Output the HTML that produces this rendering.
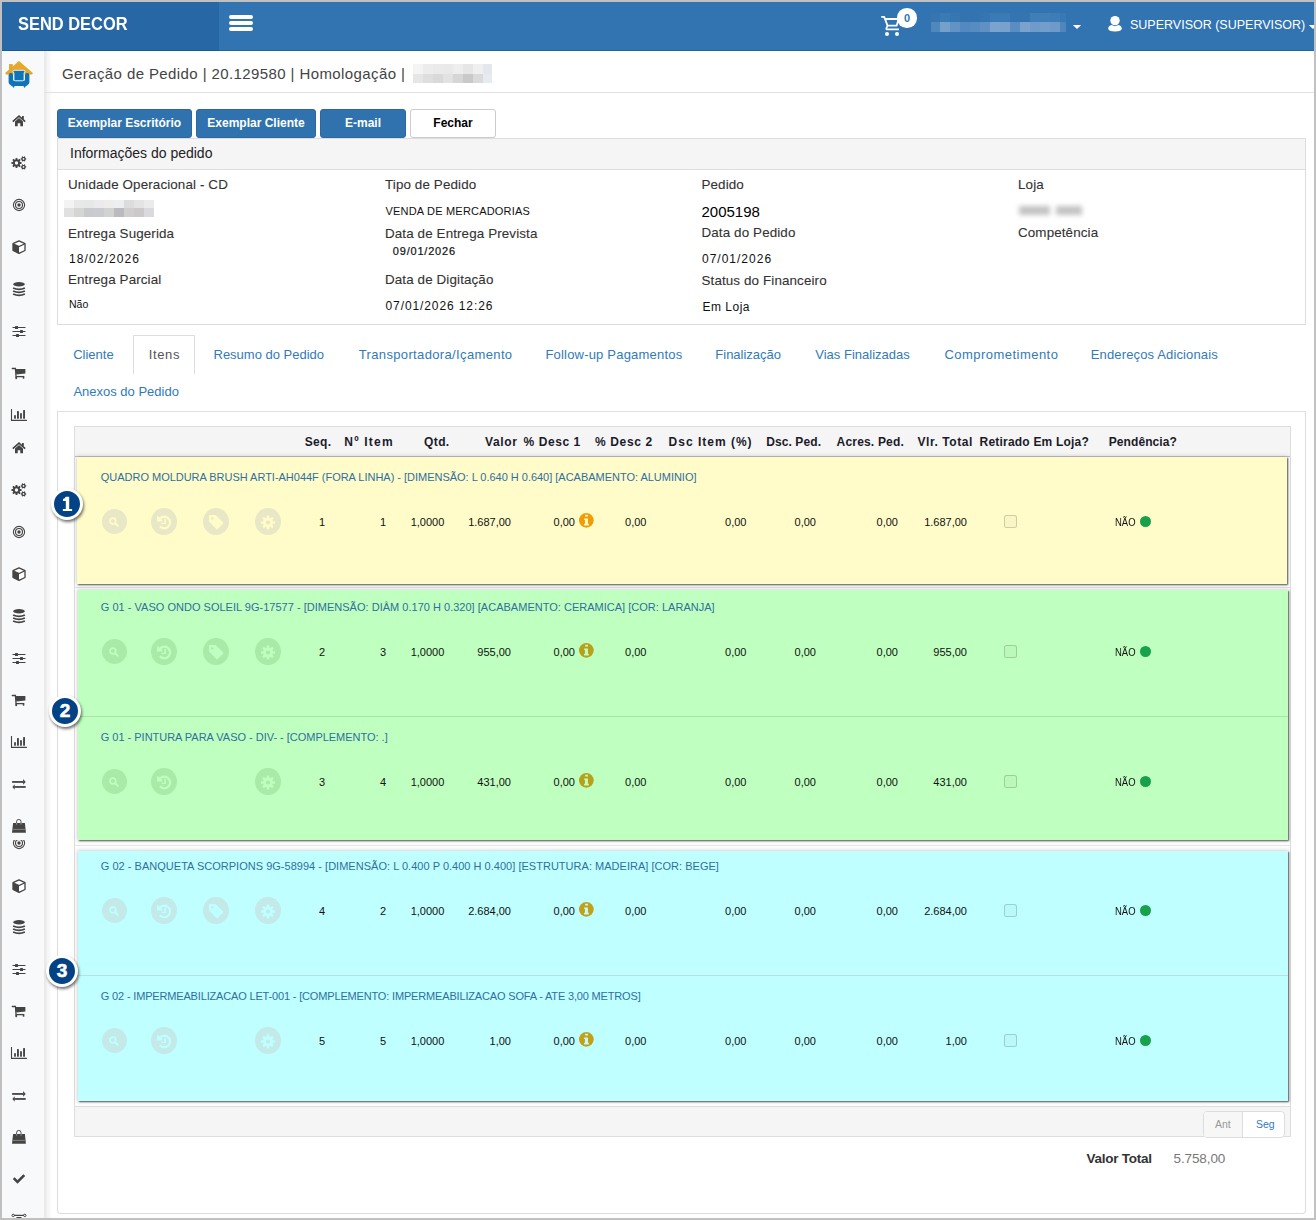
<!DOCTYPE html><html><head><meta charset="utf-8"><title>Send Decor</title><style>
*{box-sizing:border-box;margin:0;padding:0}
html,body{width:1316px;height:1220px;overflow:hidden;background:#fff}
body{font-family:"Liberation Sans",sans-serif;position:relative;color:#333}
.a{position:absolute;white-space:nowrap}
svg.a{overflow:visible}
.gb{position:absolute;background:#c0c0c0}
.btn{position:absolute;top:109px;height:29px;border-radius:3px;background:#3072ae;border:1px solid #2b67a2;color:#fff;font:bold 12px "Liberation Sans",sans-serif;text-align:center;line-height:27px}
.lbl{position:absolute;font-size:13.4px;color:#333;white-space:nowrap}
.val{position:absolute;font-size:12px;color:#111;white-space:nowrap}
.tab{position:absolute;font-size:13px;color:#337ab7;white-space:nowrap}
.hd{position:absolute;font:bold 12px "Liberation Sans",sans-serif;color:#1b1b2a;white-space:nowrap}
.card{position:absolute;box-shadow:1px 1px 1.5px rgba(0,0,0,.62),0 0 4px 1px rgba(0,0,0,.16)}
.ttl{position:absolute;left:100px;font-size:11px;color:#31708f;white-space:nowrap}
.d{position:absolute;font-size:11px;color:#111;white-space:nowrap}
.circ{position:absolute;border-radius:50%}
.badge{position:absolute;width:32px;height:32px;border-radius:50%;background:#034285;border:3.5px solid #fff;box-shadow:1px 2px 3px rgba(0,0,0,.55);color:#fff;font:bold 19px "Liberation Sans",sans-serif;text-align:center;line-height:26.5px;-webkit-text-stroke:0.6px #fff}
</style></head><body>
<div class="a" style="left:2px;top:2px;width:1312px;height:49px;background:#3174b1;border-bottom:1px solid #24639f"></div>
<div class="a" style="left:2px;top:2px;width:217px;height:49px;background:#2767a5;border-bottom:1px solid #17589a"></div>
<div class="a" style="left:18.3px;top:13.2px;font:bold 19px 'Liberation Sans',sans-serif;color:#fff;transform:scaleX(0.865);transform-origin:0 0">SEND DECOR</div>
<div class="a" style="left:229px;top:15px;width:24px;height:4px;border-radius:2px;background:#fff"></div>
<div class="a" style="left:229px;top:21px;width:24px;height:4px;border-radius:2px;background:#fff"></div>
<div class="a" style="left:229px;top:27px;width:24px;height:4px;border-radius:2px;background:#fff"></div>
<svg class="a" style="left:876px;top:4px" width="30" height="36"><path d="M5.2 12.9 H8.2 L11.6 21.7 H20.6 L22.6 15 H9" fill="none" stroke="#fff" stroke-width="1.8" stroke-linejoin="round"/><path d="M11.6 21.7 L10.4 24.2 Q10.1 25.4 11.4 25.4 H23" fill="none" stroke="#fff" stroke-width="1.8"/><circle cx="11" cy="30.1" r="2" fill="#fff"/><circle cx="21" cy="30.1" r="2" fill="#fff"/></svg>
<div class="circ" style="left:897.4px;top:8.3px;width:19.4px;height:19.4px;background:#fff"></div>
<div class="a" style="left:897.4px;top:12px;width:19.4px;text-align:center;font:bold 11px 'Liberation Sans',sans-serif;color:#3174b1">0</div>
<div class="a" style="left:931px;top:13px;width:9px;height:9px;background:#3576b1"></div>
<div class="a" style="left:931px;top:22px;width:9px;height:10px;background:#4f88bd"></div>
<div class="a" style="left:940px;top:13px;width:10px;height:9px;background:#3a7ab5"></div>
<div class="a" style="left:940px;top:22px;width:10px;height:10px;background:#76a0cc"></div>
<div class="a" style="left:950px;top:13px;width:10px;height:9px;background:#3676b2"></div>
<div class="a" style="left:950px;top:22px;width:10px;height:10px;background:#6393c5"></div>
<div class="a" style="left:960px;top:13px;width:10px;height:9px;background:#3373b0"></div>
<div class="a" style="left:960px;top:22px;width:10px;height:10px;background:#5289c0"></div>
<div class="a" style="left:970px;top:13px;width:10px;height:9px;background:#3373b0"></div>
<div class="a" style="left:970px;top:22px;width:10px;height:10px;background:#578cc1"></div>
<div class="a" style="left:980px;top:13px;width:10px;height:9px;background:#3575b1"></div>
<div class="a" style="left:980px;top:22px;width:10px;height:10px;background:#6090c4"></div>
<div class="a" style="left:990px;top:13px;width:10px;height:9px;background:#3b7bb5"></div>
<div class="a" style="left:990px;top:22px;width:10px;height:10px;background:#7aa3ce"></div>
<div class="a" style="left:1000px;top:13px;width:10px;height:9px;background:#3b7bb5"></div>
<div class="a" style="left:1000px;top:22px;width:10px;height:10px;background:#78a1cd"></div>
<div class="a" style="left:1010px;top:13px;width:10px;height:9px;background:#3474b1"></div>
<div class="a" style="left:1010px;top:22px;width:10px;height:10px;background:#5a8ec2"></div>
<div class="a" style="left:1020px;top:13px;width:10px;height:9px;background:#3474b1"></div>
<div class="a" style="left:1020px;top:22px;width:10px;height:10px;background:#79a2cd"></div>
<div class="a" style="left:1030px;top:13px;width:10px;height:9px;background:#3f7eb7"></div>
<div class="a" style="left:1030px;top:22px;width:10px;height:10px;background:#6f9bca"></div>
<div class="a" style="left:1040px;top:13px;width:10px;height:9px;background:#3f7eb7"></div>
<div class="a" style="left:1040px;top:22px;width:10px;height:10px;background:#729ecb"></div>
<div class="a" style="left:1050px;top:13px;width:10px;height:9px;background:#3d7cb6"></div>
<div class="a" style="left:1050px;top:22px;width:10px;height:10px;background:#6d9ac9"></div>
<div class="a" style="left:1060px;top:13px;width:6px;height:9px;background:#3878b3"></div>
<div class="a" style="left:1060px;top:22px;width:6px;height:10px;background:#4f87bd"></div>
<svg class="a" style="left:1072px;top:24px" width="10" height="6"><path d="M0.8 1 H9.2 L5 5 Z" fill="#fff"/></svg>
<svg class="a" style="left:1106px;top:14px" width="18" height="20"><circle cx="9" cy="6.6" r="4.7" fill="#fff"/><path d="M2.2 14.5 Q2.4 11.6 5.5 11 L9 12.2 L12.5 11 Q15.6 11.6 15.8 14.5 Q15.8 17.4 9 17.4 Q2.2 17.4 2.2 14.5 Z" fill="#fff"/></svg>
<div class="a" style="left:1130px;top:17.6px;font-size:12.5px;color:#fff">SUPERVISOR (SUPERVISOR)</div>
<svg class="a" style="left:1308px;top:24px" width="10" height="6"><path d="M0.8 1 H9.2 L5 5 Z" fill="#fff"/></svg>
<div class="a" style="left:2px;top:51px;width:42px;height:1167px;background:#f8f9fb"></div>
<div class="a" style="left:44px;top:51px;width:9px;height:1167px;background:linear-gradient(to right,#eaeaea,#ececec 25%,#f5f5f5 35%,#f7f7f7 55%,#fdfdfd 80%,#fff)"></div>
<svg class="a" style="left:4px;top:59px" width="32" height="32"><path d="M15 2.1 L28.3 13.6 Q29.3 14.8 28 15.6 L24 15.7 H6 L2 15.6 Q0.7 14.8 1.7 13.6 Z" fill="#e5a82c"/><rect x="5" y="4.9" width="3.8" height="6.5" rx="0.6" fill="#e5a82c"/><path d="M4.6 16.3 Q4.6 14.1 6.85 14.1 Q9.1 14.1 9.1 16.3 V21.5 H20.9 V16.3 Q20.9 14.1 23.15 14.1 Q25.4 14.1 25.4 16.3 V23.2 Q25.4 24.6 23.6 26 L22.4 26.9 H7.6 L6.4 26 Q4.6 24.6 4.6 23.2 Z" fill="#0f73b8"/><path d="M7.9 26.4 H10.9 L9.4 29 Z M19.1 26.4 H22.1 L20.6 29 Z" fill="#0f73b8"/><path d="M10.1 11.3 H19.9 Q21.1 11.3 20.9 12.5 L20.1 14 V20.2 Q20.1 21.8 18.5 21.8 H11.5 Q9.9 21.8 9.9 20.2 V14 L9.1 12.5 Q8.9 11.3 10.1 11.3 Z" fill="#0f73b8" stroke="#f8f9fb" stroke-width="0.9"/></svg>
<svg class="a" style="left:11px;top:113px" width="16" height="16"><path d="M1.8 8.6 L8 3.2 L14.2 8.6" fill="none" stroke="#444" stroke-width="1.7"/><rect x="11" y="3" width="1.8" height="3.2" fill="#444"/><path d="M4 8.4 L8 5 L12 8.4 V13.2 H9.3 V10.2 H6.7 V13.2 H4 Z" fill="#444"/></svg>
<svg class="a" style="left:11px;top:155px" width="16" height="16"><path d="M9.07 7.01 L10.52 7.12 L10.52 8.88 L9.07 8.99 L8.72 9.82 L9.67 10.93 L8.43 12.17 L7.32 11.22 L6.49 11.57 L6.38 13.02 L4.62 13.02 L4.51 11.57 L3.68 11.22 L2.57 12.17 L1.33 10.93 L2.28 9.82 L1.93 8.99 L0.48 8.88 L0.48 7.12 L1.93 7.01 L2.28 6.18 L1.33 5.07 L2.57 3.83 L3.68 4.78 L4.51 4.43 L4.62 2.98 L6.38 2.98 L6.49 4.43 L7.32 4.78 L8.43 3.83 L9.67 5.07 L8.72 6.18 Z M7.20 8.00 A1.7 1.7 0 1 0 3.80 8.00 A1.7 1.7 0 1 0 7.20 8.00 Z" fill="#444" fill-rule="evenodd"/><path d="M14.35 3.13 L15.21 3.20 L15.21 4.60 L14.35 4.67 L14.09 5.12 L14.46 5.90 L13.25 6.60 L12.76 5.88 L12.24 5.88 L11.75 6.60 L10.54 5.90 L10.91 5.12 L10.65 4.67 L9.79 4.60 L9.79 3.20 L10.65 3.13 L10.91 2.68 L10.54 1.90 L11.75 1.20 L12.24 1.92 L12.76 1.92 L13.25 1.20 L14.46 1.90 L14.09 2.68 Z M13.35 3.90 A0.85 0.85 0 1 0 11.65 3.90 A0.85 0.85 0 1 0 13.35 3.90 Z" fill="#444" fill-rule="evenodd"/><path d="M14.35 11.13 L15.21 11.20 L15.21 12.60 L14.35 12.67 L14.09 13.12 L14.46 13.90 L13.25 14.60 L12.76 13.88 L12.24 13.88 L11.75 14.60 L10.54 13.90 L10.91 13.12 L10.65 12.67 L9.79 12.60 L9.79 11.20 L10.65 11.13 L10.91 10.68 L10.54 9.90 L11.75 9.20 L12.24 9.92 L12.76 9.92 L13.25 9.20 L14.46 9.90 L14.09 10.68 Z M13.35 11.90 A0.85 0.85 0 1 0 11.65 11.90 A0.85 0.85 0 1 0 13.35 11.90 Z" fill="#444" fill-rule="evenodd"/></svg>
<svg class="a" style="left:11px;top:197px" width="16" height="16"><circle cx="8" cy="8" r="5.6" fill="none" stroke="#444" stroke-width="1.1"/><circle cx="8" cy="8" r="3.5" fill="none" stroke="#444" stroke-width="1.1"/><circle cx="8" cy="8" r="1.7" fill="#444"/></svg>
<svg class="a" style="left:11px;top:239px" width="16" height="16"><path d="M8 1.8 L14 4.7 V11.5 L8 14.4 L2 11.5 V4.7 Z" fill="#fff" stroke="#444" stroke-width="1.3" stroke-linejoin="round"/><path d="M2 4.7 L8 7.6 V14.4 L2 11.5 Z" fill="#444"/><path d="M2 4.7 L8 7.6 L14 4.7" fill="none" stroke="#444" stroke-width="1.2"/></svg>
<svg class="a" style="left:11px;top:281px" width="16" height="16"><ellipse cx="8" cy="3.3" rx="5.9" ry="2.2" fill="#444"/><path d="M2.1 6.9 Q8 9.7 13.9 6.9" fill="none" stroke="#444" stroke-width="1.7"/><path d="M2.1 9.9 Q8 12.7 13.9 9.9" fill="none" stroke="#444" stroke-width="1.7"/><path d="M2.1 12.9 Q8 15.7 13.9 12.9" fill="none" stroke="#444" stroke-width="1.7"/></svg>
<svg class="a" style="left:11px;top:323px" width="16" height="16"><path d="M1.9 4.5 H14.1 M1.9 8.5 H14.1 M1.9 12.5 H14.1" stroke="#444" stroke-width="1" stroke-linecap="round"/><rect x="4" y="3" width="3" height="3" rx="0.6" fill="#444"/><rect x="9" y="7" width="3" height="3" rx="0.6" fill="#444"/><rect x="5" y="11" width="3" height="3" rx="0.6" fill="#444"/></svg>
<svg class="a" style="left:11px;top:365px" width="16" height="16"><path d="M1.3 3.5 H4.4 L5.2 13.6" fill="none" stroke="#444" stroke-width="1.3" stroke-linecap="round"/><path d="M4.3 4 H14.4 V8.5 L5.3 9.6 Z" fill="#444"/><path d="M5 11.6 H13.2" stroke="#444" stroke-width="1.3"/><rect x="4.6" y="11.4" width="1.5" height="2.3" fill="#444"/><rect x="11.8" y="11.4" width="1.5" height="2.3" fill="#444"/></svg>
<svg class="a" style="left:11px;top:407px" width="16" height="16"><path d="M0.5 2.1 V13.4 H15.9" fill="none" stroke="#444" stroke-width="1.1"/><rect x="3.1" y="8.2" width="1.8" height="3.5" fill="#444"/><rect x="6" y="4.1" width="1.9" height="7.6" fill="#444"/><rect x="9.1" y="6.2" width="1.8" height="5.5" fill="#444"/><rect x="12.1" y="3.1" width="1.9" height="8.6" fill="#444"/></svg>
<svg class="a" style="left:11px;top:440px" width="16" height="16"><path d="M1.8 8.6 L8 3.2 L14.2 8.6" fill="none" stroke="#444" stroke-width="1.7"/><rect x="11" y="3" width="1.8" height="3.2" fill="#444"/><path d="M4 8.4 L8 5 L12 8.4 V13.2 H9.3 V10.2 H6.7 V13.2 H4 Z" fill="#444"/></svg>
<svg class="a" style="left:11px;top:482px" width="16" height="16"><path d="M9.07 7.01 L10.52 7.12 L10.52 8.88 L9.07 8.99 L8.72 9.82 L9.67 10.93 L8.43 12.17 L7.32 11.22 L6.49 11.57 L6.38 13.02 L4.62 13.02 L4.51 11.57 L3.68 11.22 L2.57 12.17 L1.33 10.93 L2.28 9.82 L1.93 8.99 L0.48 8.88 L0.48 7.12 L1.93 7.01 L2.28 6.18 L1.33 5.07 L2.57 3.83 L3.68 4.78 L4.51 4.43 L4.62 2.98 L6.38 2.98 L6.49 4.43 L7.32 4.78 L8.43 3.83 L9.67 5.07 L8.72 6.18 Z M7.20 8.00 A1.7 1.7 0 1 0 3.80 8.00 A1.7 1.7 0 1 0 7.20 8.00 Z" fill="#444" fill-rule="evenodd"/><path d="M14.35 3.13 L15.21 3.20 L15.21 4.60 L14.35 4.67 L14.09 5.12 L14.46 5.90 L13.25 6.60 L12.76 5.88 L12.24 5.88 L11.75 6.60 L10.54 5.90 L10.91 5.12 L10.65 4.67 L9.79 4.60 L9.79 3.20 L10.65 3.13 L10.91 2.68 L10.54 1.90 L11.75 1.20 L12.24 1.92 L12.76 1.92 L13.25 1.20 L14.46 1.90 L14.09 2.68 Z M13.35 3.90 A0.85 0.85 0 1 0 11.65 3.90 A0.85 0.85 0 1 0 13.35 3.90 Z" fill="#444" fill-rule="evenodd"/><path d="M14.35 11.13 L15.21 11.20 L15.21 12.60 L14.35 12.67 L14.09 13.12 L14.46 13.90 L13.25 14.60 L12.76 13.88 L12.24 13.88 L11.75 14.60 L10.54 13.90 L10.91 13.12 L10.65 12.67 L9.79 12.60 L9.79 11.20 L10.65 11.13 L10.91 10.68 L10.54 9.90 L11.75 9.20 L12.24 9.92 L12.76 9.92 L13.25 9.20 L14.46 9.90 L14.09 10.68 Z M13.35 11.90 A0.85 0.85 0 1 0 11.65 11.90 A0.85 0.85 0 1 0 13.35 11.90 Z" fill="#444" fill-rule="evenodd"/></svg>
<svg class="a" style="left:11px;top:524px" width="16" height="16"><circle cx="8" cy="8" r="5.6" fill="none" stroke="#444" stroke-width="1.1"/><circle cx="8" cy="8" r="3.5" fill="none" stroke="#444" stroke-width="1.1"/><circle cx="8" cy="8" r="1.7" fill="#444"/></svg>
<svg class="a" style="left:11px;top:566px" width="16" height="16"><path d="M8 1.8 L14 4.7 V11.5 L8 14.4 L2 11.5 V4.7 Z" fill="#fff" stroke="#444" stroke-width="1.3" stroke-linejoin="round"/><path d="M2 4.7 L8 7.6 V14.4 L2 11.5 Z" fill="#444"/><path d="M2 4.7 L8 7.6 L14 4.7" fill="none" stroke="#444" stroke-width="1.2"/></svg>
<svg class="a" style="left:11px;top:608px" width="16" height="16"><ellipse cx="8" cy="3.3" rx="5.9" ry="2.2" fill="#444"/><path d="M2.1 6.9 Q8 9.7 13.9 6.9" fill="none" stroke="#444" stroke-width="1.7"/><path d="M2.1 9.9 Q8 12.7 13.9 9.9" fill="none" stroke="#444" stroke-width="1.7"/><path d="M2.1 12.9 Q8 15.7 13.9 12.9" fill="none" stroke="#444" stroke-width="1.7"/></svg>
<svg class="a" style="left:11px;top:650px" width="16" height="16"><path d="M1.9 4.5 H14.1 M1.9 8.5 H14.1 M1.9 12.5 H14.1" stroke="#444" stroke-width="1" stroke-linecap="round"/><rect x="4" y="3" width="3" height="3" rx="0.6" fill="#444"/><rect x="9" y="7" width="3" height="3" rx="0.6" fill="#444"/><rect x="5" y="11" width="3" height="3" rx="0.6" fill="#444"/></svg>
<svg class="a" style="left:11px;top:692px" width="16" height="16"><path d="M1.3 3.5 H4.4 L5.2 13.6" fill="none" stroke="#444" stroke-width="1.3" stroke-linecap="round"/><path d="M4.3 4 H14.4 V8.5 L5.3 9.6 Z" fill="#444"/><path d="M5 11.6 H13.2" stroke="#444" stroke-width="1.3"/><rect x="4.6" y="11.4" width="1.5" height="2.3" fill="#444"/><rect x="11.8" y="11.4" width="1.5" height="2.3" fill="#444"/></svg>
<svg class="a" style="left:11px;top:734px" width="16" height="16"><path d="M0.5 2.1 V13.4 H15.9" fill="none" stroke="#444" stroke-width="1.1"/><rect x="3.1" y="8.2" width="1.8" height="3.5" fill="#444"/><rect x="6" y="4.1" width="1.9" height="7.6" fill="#444"/><rect x="9.1" y="6.2" width="1.8" height="5.5" fill="#444"/><rect x="12.1" y="3.1" width="1.9" height="8.6" fill="#444"/></svg>
<svg class="a" style="left:11px;top:776px" width="16" height="16"><path d="M1.1 5.95 H12.4" stroke="#444" stroke-width="1.8"/><path d="M12.1 3.1 L14.7 5.95 L12.1 8.7 Z" fill="#444"/><path d="M3.4 10.95 H14.7" stroke="#444" stroke-width="1.8"/><path d="M3.7 8.2 L1.3 10.95 L3.7 13.7 Z" fill="#444"/></svg>
<svg class="a" style="left:11px;top:835px" width="16" height="16"><circle cx="8" cy="8" r="5.6" fill="none" stroke="#444" stroke-width="1.1"/><circle cx="8" cy="8" r="3.5" fill="none" stroke="#444" stroke-width="1.1"/><circle cx="8" cy="8" r="1.7" fill="#444"/></svg>
<div class="a" style="left:9px;top:833px;width:20px;height:6.5px;background:#f8f9fb"></div>
<svg class="a" style="left:11px;top:818px" width="16" height="16"><path d="M5.6 5.6 V3.6 A2.2 2.2 0 0 1 10 3.6 V5.6" fill="none" stroke="#444" stroke-width="0.95"/><path d="M2.1 5 H13.9 L14.9 14.7 H1 Z" fill="#444"/><rect x="5.1" y="5.3" width="1.1" height="1.1" fill="#bbb"/><rect x="9.5" y="5.3" width="1.1" height="1.1" fill="#bbb"/><path d="M1.3 11.4 H14.6" stroke="#8a8a8a" stroke-width="0.9"/></svg>
<svg class="a" style="left:11px;top:877.5px" width="16" height="16"><path d="M8 1.8 L14 4.7 V11.5 L8 14.4 L2 11.5 V4.7 Z" fill="#fff" stroke="#444" stroke-width="1.3" stroke-linejoin="round"/><path d="M2 4.7 L8 7.6 V14.4 L2 11.5 Z" fill="#444"/><path d="M2 4.7 L8 7.6 L14 4.7" fill="none" stroke="#444" stroke-width="1.2"/></svg>
<svg class="a" style="left:11px;top:919px" width="16" height="16"><ellipse cx="8" cy="3.3" rx="5.9" ry="2.2" fill="#444"/><path d="M2.1 6.9 Q8 9.7 13.9 6.9" fill="none" stroke="#444" stroke-width="1.7"/><path d="M2.1 9.9 Q8 12.7 13.9 9.9" fill="none" stroke="#444" stroke-width="1.7"/><path d="M2.1 12.9 Q8 15.7 13.9 12.9" fill="none" stroke="#444" stroke-width="1.7"/></svg>
<svg class="a" style="left:11px;top:961px" width="16" height="16"><path d="M1.9 4.5 H14.1 M1.9 8.5 H14.1 M1.9 12.5 H14.1" stroke="#444" stroke-width="1" stroke-linecap="round"/><rect x="4" y="3" width="3" height="3" rx="0.6" fill="#444"/><rect x="9" y="7" width="3" height="3" rx="0.6" fill="#444"/><rect x="5" y="11" width="3" height="3" rx="0.6" fill="#444"/></svg>
<svg class="a" style="left:11px;top:1003px" width="16" height="16"><path d="M1.3 3.5 H4.4 L5.2 13.6" fill="none" stroke="#444" stroke-width="1.3" stroke-linecap="round"/><path d="M4.3 4 H14.4 V8.5 L5.3 9.6 Z" fill="#444"/><path d="M5 11.6 H13.2" stroke="#444" stroke-width="1.3"/><rect x="4.6" y="11.4" width="1.5" height="2.3" fill="#444"/><rect x="11.8" y="11.4" width="1.5" height="2.3" fill="#444"/></svg>
<svg class="a" style="left:11px;top:1045px" width="16" height="16"><path d="M0.5 2.1 V13.4 H15.9" fill="none" stroke="#444" stroke-width="1.1"/><rect x="3.1" y="8.2" width="1.8" height="3.5" fill="#444"/><rect x="6" y="4.1" width="1.9" height="7.6" fill="#444"/><rect x="9.1" y="6.2" width="1.8" height="5.5" fill="#444"/><rect x="12.1" y="3.1" width="1.9" height="8.6" fill="#444"/></svg>
<svg class="a" style="left:11px;top:1087.5px" width="16" height="16"><path d="M1.1 5.95 H12.4" stroke="#444" stroke-width="1.8"/><path d="M12.1 3.1 L14.7 5.95 L12.1 8.7 Z" fill="#444"/><path d="M3.4 10.95 H14.7" stroke="#444" stroke-width="1.8"/><path d="M3.7 8.2 L1.3 10.95 L3.7 13.7 Z" fill="#444"/></svg>
<svg class="a" style="left:11px;top:1129px" width="16" height="16"><path d="M5.6 5.6 V3.6 A2.2 2.2 0 0 1 10 3.6 V5.6" fill="none" stroke="#444" stroke-width="0.95"/><path d="M2.1 5 H13.9 L14.9 14.7 H1 Z" fill="#444"/><rect x="5.1" y="5.3" width="1.1" height="1.1" fill="#bbb"/><rect x="9.5" y="5.3" width="1.1" height="1.1" fill="#bbb"/><path d="M1.3 11.4 H14.6" stroke="#8a8a8a" stroke-width="0.9"/></svg>
<svg class="a" style="left:11px;top:1171px" width="16" height="16"><path d="M2.7 7.2 L6.5 11 L13.3 4.2" fill="none" stroke="#444" stroke-width="2.6"/></svg>
<svg class="a" style="left:11px;top:1211px" width="16" height="16"><path d="M3.2 4.4 H12.8 M5.5 6.6 H10.5" stroke="#444" stroke-width="1.1"/><circle cx="2.2" cy="4.4" r="1.2" fill="none" stroke="#444" stroke-width="1"/><circle cx="13.8" cy="4.4" r="1.2" fill="none" stroke="#444" stroke-width="1"/></svg>
<div class="a" style="left:62px;top:65px;font-size:15px;color:#444;letter-spacing:0.4px">Geração de Pedido | 20.129580 | Homologação |</div>
<div class="a" style="left:44px;top:92px;width:1270px;height:1px;background:#e0e0e0"></div>
<div class="a" style="left:413px;top:64px;width:10px;height:10px;background:#f4f4f4"></div>
<div class="a" style="left:413px;top:74px;width:10px;height:9px;background:#e6e6e6"></div>
<div class="a" style="left:423px;top:64px;width:10px;height:10px;background:#ececec"></div>
<div class="a" style="left:423px;top:74px;width:10px;height:9px;background:#dedede"></div>
<div class="a" style="left:433px;top:64px;width:10px;height:10px;background:#eaeaea"></div>
<div class="a" style="left:433px;top:74px;width:10px;height:9px;background:#d9d9d9"></div>
<div class="a" style="left:443px;top:64px;width:10px;height:10px;background:#e9e9e9"></div>
<div class="a" style="left:443px;top:74px;width:10px;height:9px;background:#e2e2e2"></div>
<div class="a" style="left:453px;top:64px;width:10px;height:10px;background:#eeeeee"></div>
<div class="a" style="left:453px;top:74px;width:10px;height:9px;background:#d6d6d6"></div>
<div class="a" style="left:463px;top:64px;width:10px;height:10px;background:#e6e6e6"></div>
<div class="a" style="left:463px;top:74px;width:10px;height:9px;background:#c9c9c9"></div>
<div class="a" style="left:473px;top:64px;width:10px;height:10px;background:#efefef"></div>
<div class="a" style="left:473px;top:74px;width:10px;height:9px;background:#dadada"></div>
<div class="a" style="left:483px;top:64px;width:9px;height:10px;background:#e3e8ee"></div>
<div class="a" style="left:483px;top:74px;width:9px;height:9px;background:#e6ebf0"></div>
<div class="btn" style="left:57px;width:135px">Exemplar Escritório</div>
<div class="btn" style="left:196px;width:120px">Exemplar Cliente</div>
<div class="btn" style="left:320px;width:86px">E-mail</div>
<div class="btn" style="left:410px;width:86px;background:#fff;border-color:#ccc;color:#000">Fechar</div>
<div class="a" style="left:57px;top:138px;width:1249px;height:187px;border:1px solid #ddd"></div>
<div class="a" style="left:58px;top:139px;width:1247px;height:31px;background:#f5f5f5;border-bottom:1px solid #ddd"></div>
<div class="a" style="left:70px;top:145px;font-size:14px;color:#222">Informações do pedido</div>
<div class="a" style="left:68px;top:185.26px;line-height:0;font-size:13.4px;color:#333;letter-spacing:0.12px;-webkit-text-stroke:0.1px #333">Unidade Operacional - CD</div>
<div class="a" style="left:385px;top:185.26px;line-height:0;font-size:13.4px;color:#333;letter-spacing:0.12px;-webkit-text-stroke:0.1px #333">Tipo de Pedido</div>
<div class="a" style="left:701.5px;top:185.26px;line-height:0;font-size:13.4px;color:#333;letter-spacing:0.12px;-webkit-text-stroke:0.1px #333">Pedido</div>
<div class="a" style="left:1018px;top:185.26px;line-height:0;font-size:13.4px;color:#333;letter-spacing:0.12px;-webkit-text-stroke:0.1px #333">Loja</div>
<div class="a" style="left:68px;top:233.76px;line-height:0;font-size:13.4px;color:#333;letter-spacing:0.12px;-webkit-text-stroke:0.1px #333">Entrega Sugerida</div>
<div class="a" style="left:385px;top:233.76px;line-height:0;font-size:13.4px;color:#333;letter-spacing:0.12px;-webkit-text-stroke:0.1px #333">Data de Entrega Prevista</div>
<div class="a" style="left:701.5px;top:232.76px;line-height:0;font-size:13.4px;color:#333;letter-spacing:0.12px;-webkit-text-stroke:0.1px #333">Data do Pedido</div>
<div class="a" style="left:1018px;top:232.76px;line-height:0;font-size:13.4px;color:#333;letter-spacing:0.12px;-webkit-text-stroke:0.1px #333">Competência</div>
<div class="a" style="left:68px;top:280.26px;line-height:0;font-size:13.4px;color:#333;letter-spacing:0.12px;-webkit-text-stroke:0.1px #333">Entrega Parcial</div>
<div class="a" style="left:385px;top:280.26px;line-height:0;font-size:13.4px;color:#333;letter-spacing:0.12px;-webkit-text-stroke:0.1px #333">Data de Digitação</div>
<div class="a" style="left:701.5px;top:280.76px;line-height:0;font-size:13.4px;color:#333;letter-spacing:0.12px;-webkit-text-stroke:0.1px #333">Status do Financeiro</div>
<div class="a" style="left:1019px;top:205.5px;width:31px;height:9px;background:#c2c2c2;filter:blur(2.4px)"></div>
<div class="a" style="left:1056px;top:205.5px;width:26px;height:9px;background:#c2c2c2;filter:blur(2.4px)"></div>
<div class="a" style="left:385.5px;top:210.69px;line-height:0;font-size:11px;color:#111;letter-spacing:0.2px">VENDA DE MERCADORIAS</div>
<div class="a" style="left:701.5px;top:211.70px;line-height:0;font-size:15px;color:#000">2005198</div>
<div class="a" style="left:392.8px;top:250.99px;line-height:0;font-size:11px;color:#111;letter-spacing:0.8px;-webkit-text-stroke:0.2px #111">09/01/2026</div>
<div class="a" style="left:69px;top:258.64px;line-height:0;font-size:12px;color:#111;letter-spacing:1.1px">18/02/2026</div>
<div class="a" style="left:702px;top:259.24px;line-height:0;font-size:12px;color:#111;letter-spacing:1.0px">07/01/2026</div>
<div class="a" style="left:69px;top:303.96px;line-height:0;font-size:10.5px;color:#111">Não</div>
<div class="a" style="left:385.5px;top:306.34px;line-height:0;font-size:12px;color:#111;letter-spacing:0.9px">07/01/2026 12:26</div>
<div class="a" style="left:702.5px;top:306.84px;line-height:0;font-size:12px;color:#111;letter-spacing:0.5px">Em Loja</div>
<div class="a" style="left:64px;top:200px;width:10px;height:8px;background:#f3f3f3"></div>
<div class="a" style="left:64px;top:208px;width:10px;height:9px;background:#e0e0e0"></div>
<div class="a" style="left:74px;top:200px;width:10px;height:8px;background:#e8e8e8"></div>
<div class="a" style="left:74px;top:208px;width:10px;height:9px;background:#d5d5d3"></div>
<div class="a" style="left:84px;top:200px;width:10px;height:8px;background:#e6e8e8"></div>
<div class="a" style="left:84px;top:208px;width:10px;height:9px;background:#c8cacc"></div>
<div class="a" style="left:94px;top:200px;width:10px;height:8px;background:#ebebed"></div>
<div class="a" style="left:94px;top:208px;width:10px;height:9px;background:#c9cbcf"></div>
<div class="a" style="left:104px;top:200px;width:10px;height:8px;background:#efedec"></div>
<div class="a" style="left:104px;top:208px;width:10px;height:9px;background:#d2d2d2"></div>
<div class="a" style="left:114px;top:200px;width:10px;height:8px;background:#eceef0"></div>
<div class="a" style="left:114px;top:208px;width:10px;height:9px;background:#bbbbbf"></div>
<div class="a" style="left:124px;top:200px;width:10px;height:8px;background:#dcdcdc"></div>
<div class="a" style="left:124px;top:208px;width:10px;height:9px;background:#cfcfcf"></div>
<div class="a" style="left:134px;top:200px;width:10px;height:8px;background:#e4e4e4"></div>
<div class="a" style="left:134px;top:208px;width:10px;height:9px;background:#cbc9c9"></div>
<div class="a" style="left:144px;top:200px;width:10px;height:8px;background:#ebebeb"></div>
<div class="a" style="left:144px;top:208px;width:10px;height:9px;background:#dadade"></div>
<div class="a" style="left:133px;top:335px;width:62px;height:39px;border:1px solid #ddd;border-bottom:0;background:#fff"></div>
<div class="a" style="left:73.2px;top:354.70px;line-height:0;font-size:13px;color:#337ab7;letter-spacing:0px">Cliente</div>
<div class="a" style="left:148.8px;top:354.70px;line-height:0;font-size:13px;color:#555;letter-spacing:0.6px">Itens</div>
<div class="a" style="left:213.5px;top:354.70px;line-height:0;font-size:13px;color:#337ab7;letter-spacing:0px">Resumo do Pedido</div>
<div class="a" style="left:358.7px;top:354.70px;line-height:0;font-size:13px;color:#337ab7;letter-spacing:0.36px">Transportadora/Içamento</div>
<div class="a" style="left:545.4px;top:354.70px;line-height:0;font-size:13px;color:#337ab7;letter-spacing:0.2px">Follow-up Pagamentos</div>
<div class="a" style="left:715.3px;top:354.70px;line-height:0;font-size:13px;color:#337ab7;letter-spacing:0px">Finalização</div>
<div class="a" style="left:815.3px;top:354.70px;line-height:0;font-size:13px;color:#337ab7;letter-spacing:0px">Vias Finalizadas</div>
<div class="a" style="left:944.4px;top:354.70px;line-height:0;font-size:13px;color:#337ab7;letter-spacing:0.47px">Comprometimento</div>
<div class="a" style="left:1090.8px;top:354.70px;line-height:0;font-size:13px;color:#337ab7;letter-spacing:0.14px">Endereços Adicionais</div>
<div class="a" style="left:73.4px;top:392.30px;line-height:0;font-size:13px;color:#337ab7">Anexos do Pedido</div>
<div class="a" style="left:57px;top:411px;width:1249px;height:803px;border:1px solid #ddd;border-top-color:#e2e2e2;border-radius:0 0 4px 4px"></div>
<div class="a" style="left:74px;top:426px;width:1217px;height:711px;border:1px solid #ddd;background:#fff"></div>
<div class="a" style="left:75px;top:427px;width:1215px;height:30px;background:#f5f5f5"></div>
<div class="a" style="left:75px;top:1106px;width:1215px;height:30px;background:#f5f5f5;border-top:1px solid #ddd"></div>
<div class="a" style="left:304.8px;top:442.24px;line-height:0;font-size:12px;font-weight:bold;color:#1b1b2a;letter-spacing:0.3px">Seq.</div>
<div class="a" style="left:344.3px;top:442.24px;line-height:0;font-size:12px;font-weight:bold;color:#1b1b2a;letter-spacing:1.2px">Nº Item</div>
<div class="a" style="left:424px;top:442.24px;line-height:0;font-size:12px;font-weight:bold;color:#1b1b2a;letter-spacing:0.4px">Qtd.</div>
<div class="a" style="left:484.9px;top:442.24px;line-height:0;font-size:12px;font-weight:bold;color:#1b1b2a;letter-spacing:0.7px">Valor</div>
<div class="a" style="left:523.6px;top:442.24px;line-height:0;font-size:12px;font-weight:bold;color:#1b1b2a;letter-spacing:0.57px">% Desc 1</div>
<div class="a" style="left:595px;top:442.24px;line-height:0;font-size:12px;font-weight:bold;color:#1b1b2a;letter-spacing:0.65px">% Desc 2</div>
<div class="a" style="left:668.6px;top:442.24px;line-height:0;font-size:12px;font-weight:bold;color:#1b1b2a;letter-spacing:1.0px">Dsc Item (%)</div>
<div class="a" style="left:766.2px;top:442.24px;line-height:0;font-size:12px;font-weight:bold;color:#1b1b2a;letter-spacing:0.1px">Dsc. Ped.</div>
<div class="a" style="left:836.6px;top:442.24px;line-height:0;font-size:12px;font-weight:bold;color:#1b1b2a;letter-spacing:0.18px">Acres. Ped.</div>
<div class="a" style="left:917.4px;top:442.24px;line-height:0;font-size:12px;font-weight:bold;color:#1b1b2a;letter-spacing:0.58px">Vlr. Total</div>
<div class="a" style="left:979.6px;top:442.24px;line-height:0;font-size:12px;font-weight:bold;color:#1b1b2a;letter-spacing:0.2px">Retirado Em Loja?</div>
<div class="a" style="left:1108.8px;top:442.24px;line-height:0;font-size:12px;font-weight:bold;color:#1b1b2a;letter-spacing:0.07px">Pendência?</div>
<div class="a" style="left:75px;top:587px;width:1215px;height:1px;background:#e4e4e4"></div>
<div class="a" style="left:75px;top:845px;width:1215px;height:1px;background:#e4e4e4"></div>
<div class="a" style="left:75px;top:456px;width:1215px;height:1px;background:#c4c4c4"></div>
<div class="card" style="left:77px;top:457px;width:1210px;height:127px;background:#fffcca"></div>
<div class="card" style="left:78px;top:590px;width:1210px;height:250px;background:#bfffbf"></div>
<div class="a" style="left:78px;top:716px;width:1210px;height:1px;background:#a9e3a9"></div>
<div class="card" style="left:78px;top:851px;width:1210px;height:250px;background:#bfffff"></div>
<div class="a" style="left:78px;top:975px;width:1210px;height:1px;background:#c5dcdc"></div>
<div class="a" style="left:100.8px;top:476.79px;line-height:0;font-size:11px;color:#306f9e;letter-spacing:-0.02px">QUADRO MOLDURA BRUSH ARTI-AH044F (FORA LINHA) - [DIMENSÃO: L 0.640 H 0.640] [ACABAMENTO: ALUMINIO]</div>
<div class="circ" style="left:101.8px;top:508.9px;width:25.2px;height:25.2px;background:#e8e7c6"></div>
<svg class="a" style="left:106.4px;top:513.5px" width="16" height="16"><circle cx="6.9" cy="7" r="2.9" fill="none" stroke="#fffcca" stroke-width="1.6"/><path d="M9 9.1 L11.8 11.9" stroke="#fffcca" stroke-width="2" stroke-linecap="round"/></svg>
<div class="circ" style="left:151.0px;top:507.7px;width:26px;height:27.6px;background:#e8e7c6"></div>
<svg class="a" style="left:156.0px;top:513.5px" width="16" height="16"><path d="M3.04 6.05 A5.8 5.8 0 1 1 3.86 12.23" fill="none" stroke="#fffcca" stroke-width="2.2"/><path d="M1 2.3 L2.4 2.3 L3.3 3.4 L6.3 6 L6.3 7.5 L1 7.5 Z" fill="#fffcca"/><rect x="8.3" y="4.8" width="1.6" height="5.2" fill="#fffcca"/><rect x="5.4" y="8.8" width="4.5" height="1.3" fill="#fffcca"/></svg>
<div class="circ" style="left:203.0px;top:507.7px;width:26px;height:27.6px;background:#e8e7c6"></div>
<svg class="a" style="left:208.0px;top:513.5px" width="16" height="16"><path d="M1.6 1.6 H7.4 L14.9 9.1 L9.1 14.9 L1.6 7.4 Z" fill="#fffcca" stroke="#fffcca" stroke-width="1.2" stroke-linejoin="round"/><circle cx="4.4" cy="4.4" r="1.2" fill="#e8e7c6"/></svg>
<div class="circ" style="left:255.0px;top:507.7px;width:26px;height:27.6px;background:#e8e7c6"></div>
<svg class="a" style="left:260.0px;top:513.5px" width="16" height="16"><path d="M12.82 7.17 L14.99 7.28 L14.99 9.72 L12.82 9.83 L12.35 10.96 L13.81 12.58 L12.08 14.31 L10.46 12.85 L9.33 13.32 L9.22 15.49 L6.78 15.49 L6.67 13.32 L5.54 12.85 L3.92 14.31 L2.19 12.58 L3.65 10.96 L3.18 9.83 L1.01 9.72 L1.01 7.28 L3.18 7.17 L3.65 6.04 L2.19 4.42 L3.92 2.69 L5.54 4.15 L6.67 3.68 L6.78 1.51 L9.22 1.51 L9.33 3.68 L10.46 4.15 L12.08 2.69 L13.81 4.42 L12.35 6.04 Z M10.10 8.50 A2.1 2.1 0 1 0 5.90 8.50 A2.1 2.1 0 1 0 10.10 8.50 Z" fill="#fffcca" fill-rule="evenodd"/></svg>
<div class="a" style="left:222px;width:200px;text-align:center;top:522.19px;line-height:0;font-size:11px;color:#111">1</div>
<div class="a" style="left:186px;width:200px;text-align:right;top:522.19px;line-height:0;font-size:11px;color:#111">1</div>
<div class="a" style="left:327.5px;width:200px;text-align:center;top:522.19px;line-height:0;font-size:11px;color:#111">1,0000</div>
<div class="a" style="left:311px;width:200px;text-align:right;top:522.19px;line-height:0;font-size:11px;color:#111">1.687,00</div>
<div class="a" style="left:375px;width:200px;text-align:right;top:522.19px;line-height:0;font-size:11px;color:#111">0,00</div>
<svg class="a" style="left:578.9px;top:513.4px" width="15" height="15"><circle cx="7.35" cy="7.35" r="7.35" fill="#f29c05"/><rect x="6.17" y="1.74" width="2.76" height="1.78" fill="#fffcca"/><path d="M5.18 5.5 H8.93 V10.8 H9.82 V12.4 H5.08 V10.8 H5.97 V7.1 H5.18 Z" fill="#fffcca"/></svg>
<div class="a" style="left:446.5px;width:200px;text-align:right;top:522.19px;line-height:0;font-size:11px;color:#111">0,00</div>
<div class="a" style="left:546.5px;width:200px;text-align:right;top:522.19px;line-height:0;font-size:11px;color:#111">0,00</div>
<div class="a" style="left:616px;width:200px;text-align:right;top:522.19px;line-height:0;font-size:11px;color:#111">0,00</div>
<div class="a" style="left:698px;width:200px;text-align:right;top:522.19px;line-height:0;font-size:11px;color:#111">0,00</div>
<div class="a" style="left:767px;width:200px;text-align:right;top:522.19px;line-height:0;font-size:11px;color:#111">1.687,00</div>
<div class="a" style="left:1004px;top:515.3px;width:13px;height:13px;border:1px solid rgba(0,0,0,.17);border-radius:2.5px;background:rgba(0,0,0,.025)"></div>
<div class="a" style="left:1114.5px;top:522.19px;line-height:0;font-size:11px;color:#111;transform:scaleX(0.86);transform-origin:0 0">NÃO</div>
<div class="circ" style="left:1139.6px;top:516.1px;width:11px;height:11px;background:#18a04a"></div>
<div class="a" style="left:100.8px;top:606.79px;line-height:0;font-size:11px;color:#306f9e;letter-spacing:0.015px">G 01 - VASO ONDO SOLEIL 9G-17577 - [DIMENSÃO: DIÂM 0.170 H 0.320] [ACABAMENTO: CERAMICA] [COR: LARANJA]</div>
<div class="circ" style="left:101.8px;top:638.9px;width:25.2px;height:25.2px;background:#aaeaa9"></div>
<svg class="a" style="left:106.4px;top:643.5px" width="16" height="16"><circle cx="6.9" cy="7" r="2.9" fill="none" stroke="#bfffbf" stroke-width="1.6"/><path d="M9 9.1 L11.8 11.9" stroke="#bfffbf" stroke-width="2" stroke-linecap="round"/></svg>
<div class="circ" style="left:151.0px;top:637.7px;width:26px;height:27.6px;background:#aaeaa9"></div>
<svg class="a" style="left:156.0px;top:643.5px" width="16" height="16"><path d="M3.04 6.05 A5.8 5.8 0 1 1 3.86 12.23" fill="none" stroke="#bfffbf" stroke-width="2.2"/><path d="M1 2.3 L2.4 2.3 L3.3 3.4 L6.3 6 L6.3 7.5 L1 7.5 Z" fill="#bfffbf"/><rect x="8.3" y="4.8" width="1.6" height="5.2" fill="#bfffbf"/><rect x="5.4" y="8.8" width="4.5" height="1.3" fill="#bfffbf"/></svg>
<div class="circ" style="left:203.0px;top:637.7px;width:26px;height:27.6px;background:#aaeaa9"></div>
<svg class="a" style="left:208.0px;top:643.5px" width="16" height="16"><path d="M1.6 1.6 H7.4 L14.9 9.1 L9.1 14.9 L1.6 7.4 Z" fill="#bfffbf" stroke="#bfffbf" stroke-width="1.2" stroke-linejoin="round"/><circle cx="4.4" cy="4.4" r="1.2" fill="#aaeaa9"/></svg>
<div class="circ" style="left:255.0px;top:637.7px;width:26px;height:27.6px;background:#aaeaa9"></div>
<svg class="a" style="left:260.0px;top:643.5px" width="16" height="16"><path d="M12.82 7.17 L14.99 7.28 L14.99 9.72 L12.82 9.83 L12.35 10.96 L13.81 12.58 L12.08 14.31 L10.46 12.85 L9.33 13.32 L9.22 15.49 L6.78 15.49 L6.67 13.32 L5.54 12.85 L3.92 14.31 L2.19 12.58 L3.65 10.96 L3.18 9.83 L1.01 9.72 L1.01 7.28 L3.18 7.17 L3.65 6.04 L2.19 4.42 L3.92 2.69 L5.54 4.15 L6.67 3.68 L6.78 1.51 L9.22 1.51 L9.33 3.68 L10.46 4.15 L12.08 2.69 L13.81 4.42 L12.35 6.04 Z M10.10 8.50 A2.1 2.1 0 1 0 5.90 8.50 A2.1 2.1 0 1 0 10.10 8.50 Z" fill="#bfffbf" fill-rule="evenodd"/></svg>
<div class="a" style="left:222px;width:200px;text-align:center;top:652.19px;line-height:0;font-size:11px;color:#111">2</div>
<div class="a" style="left:186px;width:200px;text-align:right;top:652.19px;line-height:0;font-size:11px;color:#111">3</div>
<div class="a" style="left:327.5px;width:200px;text-align:center;top:652.19px;line-height:0;font-size:11px;color:#111">1,0000</div>
<div class="a" style="left:311px;width:200px;text-align:right;top:652.19px;line-height:0;font-size:11px;color:#111">955,00</div>
<div class="a" style="left:375px;width:200px;text-align:right;top:652.19px;line-height:0;font-size:11px;color:#111">0,00</div>
<svg class="a" style="left:578.9px;top:643.4px" width="15" height="15"><circle cx="7.35" cy="7.35" r="7.35" fill="#b8a01a"/><rect x="6.17" y="1.74" width="2.76" height="1.78" fill="#bfffbf"/><path d="M5.18 5.5 H8.93 V10.8 H9.82 V12.4 H5.08 V10.8 H5.97 V7.1 H5.18 Z" fill="#bfffbf"/></svg>
<div class="a" style="left:446.5px;width:200px;text-align:right;top:652.19px;line-height:0;font-size:11px;color:#111">0,00</div>
<div class="a" style="left:546.5px;width:200px;text-align:right;top:652.19px;line-height:0;font-size:11px;color:#111">0,00</div>
<div class="a" style="left:616px;width:200px;text-align:right;top:652.19px;line-height:0;font-size:11px;color:#111">0,00</div>
<div class="a" style="left:698px;width:200px;text-align:right;top:652.19px;line-height:0;font-size:11px;color:#111">0,00</div>
<div class="a" style="left:767px;width:200px;text-align:right;top:652.19px;line-height:0;font-size:11px;color:#111">955,00</div>
<div class="a" style="left:1004px;top:645.3px;width:13px;height:13px;border:1px solid rgba(0,0,0,.17);border-radius:2.5px;background:rgba(0,0,0,.025)"></div>
<div class="a" style="left:1114.5px;top:652.19px;line-height:0;font-size:11px;color:#111;transform:scaleX(0.86);transform-origin:0 0">NÃO</div>
<div class="circ" style="left:1139.6px;top:646.1px;width:11px;height:11px;background:#18a04a"></div>
<div class="a" style="left:100.8px;top:736.79px;line-height:0;font-size:11px;color:#306f9e;letter-spacing:-0.02px">G 01 - PINTURA PARA VASO - DIV- - [COMPLEMENTO: .]</div>
<div class="circ" style="left:101.8px;top:768.9px;width:25.2px;height:25.2px;background:#aaeaa9"></div>
<svg class="a" style="left:106.4px;top:773.5px" width="16" height="16"><circle cx="6.9" cy="7" r="2.9" fill="none" stroke="#bfffbf" stroke-width="1.6"/><path d="M9 9.1 L11.8 11.9" stroke="#bfffbf" stroke-width="2" stroke-linecap="round"/></svg>
<div class="circ" style="left:151.0px;top:767.7px;width:26px;height:27.6px;background:#aaeaa9"></div>
<svg class="a" style="left:156.0px;top:773.5px" width="16" height="16"><path d="M3.04 6.05 A5.8 5.8 0 1 1 3.86 12.23" fill="none" stroke="#bfffbf" stroke-width="2.2"/><path d="M1 2.3 L2.4 2.3 L3.3 3.4 L6.3 6 L6.3 7.5 L1 7.5 Z" fill="#bfffbf"/><rect x="8.3" y="4.8" width="1.6" height="5.2" fill="#bfffbf"/><rect x="5.4" y="8.8" width="4.5" height="1.3" fill="#bfffbf"/></svg>
<div class="circ" style="left:255.0px;top:767.7px;width:26px;height:27.6px;background:#aaeaa9"></div>
<svg class="a" style="left:260.0px;top:773.5px" width="16" height="16"><path d="M12.82 7.17 L14.99 7.28 L14.99 9.72 L12.82 9.83 L12.35 10.96 L13.81 12.58 L12.08 14.31 L10.46 12.85 L9.33 13.32 L9.22 15.49 L6.78 15.49 L6.67 13.32 L5.54 12.85 L3.92 14.31 L2.19 12.58 L3.65 10.96 L3.18 9.83 L1.01 9.72 L1.01 7.28 L3.18 7.17 L3.65 6.04 L2.19 4.42 L3.92 2.69 L5.54 4.15 L6.67 3.68 L6.78 1.51 L9.22 1.51 L9.33 3.68 L10.46 4.15 L12.08 2.69 L13.81 4.42 L12.35 6.04 Z M10.10 8.50 A2.1 2.1 0 1 0 5.90 8.50 A2.1 2.1 0 1 0 10.10 8.50 Z" fill="#bfffbf" fill-rule="evenodd"/></svg>
<div class="a" style="left:222px;width:200px;text-align:center;top:782.19px;line-height:0;font-size:11px;color:#111">3</div>
<div class="a" style="left:186px;width:200px;text-align:right;top:782.19px;line-height:0;font-size:11px;color:#111">4</div>
<div class="a" style="left:327.5px;width:200px;text-align:center;top:782.19px;line-height:0;font-size:11px;color:#111">1,0000</div>
<div class="a" style="left:311px;width:200px;text-align:right;top:782.19px;line-height:0;font-size:11px;color:#111">431,00</div>
<div class="a" style="left:375px;width:200px;text-align:right;top:782.19px;line-height:0;font-size:11px;color:#111">0,00</div>
<svg class="a" style="left:578.9px;top:773.4px" width="15" height="15"><circle cx="7.35" cy="7.35" r="7.35" fill="#b8a01a"/><rect x="6.17" y="1.74" width="2.76" height="1.78" fill="#bfffbf"/><path d="M5.18 5.5 H8.93 V10.8 H9.82 V12.4 H5.08 V10.8 H5.97 V7.1 H5.18 Z" fill="#bfffbf"/></svg>
<div class="a" style="left:446.5px;width:200px;text-align:right;top:782.19px;line-height:0;font-size:11px;color:#111">0,00</div>
<div class="a" style="left:546.5px;width:200px;text-align:right;top:782.19px;line-height:0;font-size:11px;color:#111">0,00</div>
<div class="a" style="left:616px;width:200px;text-align:right;top:782.19px;line-height:0;font-size:11px;color:#111">0,00</div>
<div class="a" style="left:698px;width:200px;text-align:right;top:782.19px;line-height:0;font-size:11px;color:#111">0,00</div>
<div class="a" style="left:767px;width:200px;text-align:right;top:782.19px;line-height:0;font-size:11px;color:#111">431,00</div>
<div class="a" style="left:1004px;top:775.3px;width:13px;height:13px;border:1px solid rgba(0,0,0,.17);border-radius:2.5px;background:rgba(0,0,0,.025)"></div>
<div class="a" style="left:1114.5px;top:782.19px;line-height:0;font-size:11px;color:#111;transform:scaleX(0.86);transform-origin:0 0">NÃO</div>
<div class="circ" style="left:1139.6px;top:776.1px;width:11px;height:11px;background:#18a04a"></div>
<div class="a" style="left:100.8px;top:865.79px;line-height:0;font-size:11px;color:#306f9e;letter-spacing:0.02px">G 02 - BANQUETA SCORPIONS 9G-58994 - [DIMENSÃO: L 0.400 P 0.400 H 0.400] [ESTRUTURA: MADEIRA] [COR: BEGE]</div>
<div class="circ" style="left:101.8px;top:897.9px;width:25.2px;height:25.2px;background:#c3e9e9"></div>
<svg class="a" style="left:106.4px;top:902.5px" width="16" height="16"><circle cx="6.9" cy="7" r="2.9" fill="none" stroke="#bfffff" stroke-width="1.6"/><path d="M9 9.1 L11.8 11.9" stroke="#bfffff" stroke-width="2" stroke-linecap="round"/></svg>
<div class="circ" style="left:151.0px;top:896.7px;width:26px;height:27.6px;background:#c3e9e9"></div>
<svg class="a" style="left:156.0px;top:902.5px" width="16" height="16"><path d="M3.04 6.05 A5.8 5.8 0 1 1 3.86 12.23" fill="none" stroke="#bfffff" stroke-width="2.2"/><path d="M1 2.3 L2.4 2.3 L3.3 3.4 L6.3 6 L6.3 7.5 L1 7.5 Z" fill="#bfffff"/><rect x="8.3" y="4.8" width="1.6" height="5.2" fill="#bfffff"/><rect x="5.4" y="8.8" width="4.5" height="1.3" fill="#bfffff"/></svg>
<div class="circ" style="left:203.0px;top:896.7px;width:26px;height:27.6px;background:#c3e9e9"></div>
<svg class="a" style="left:208.0px;top:902.5px" width="16" height="16"><path d="M1.6 1.6 H7.4 L14.9 9.1 L9.1 14.9 L1.6 7.4 Z" fill="#bfffff" stroke="#bfffff" stroke-width="1.2" stroke-linejoin="round"/><circle cx="4.4" cy="4.4" r="1.2" fill="#c3e9e9"/></svg>
<div class="circ" style="left:255.0px;top:896.7px;width:26px;height:27.6px;background:#c3e9e9"></div>
<svg class="a" style="left:260.0px;top:902.5px" width="16" height="16"><path d="M12.82 7.17 L14.99 7.28 L14.99 9.72 L12.82 9.83 L12.35 10.96 L13.81 12.58 L12.08 14.31 L10.46 12.85 L9.33 13.32 L9.22 15.49 L6.78 15.49 L6.67 13.32 L5.54 12.85 L3.92 14.31 L2.19 12.58 L3.65 10.96 L3.18 9.83 L1.01 9.72 L1.01 7.28 L3.18 7.17 L3.65 6.04 L2.19 4.42 L3.92 2.69 L5.54 4.15 L6.67 3.68 L6.78 1.51 L9.22 1.51 L9.33 3.68 L10.46 4.15 L12.08 2.69 L13.81 4.42 L12.35 6.04 Z M10.10 8.50 A2.1 2.1 0 1 0 5.90 8.50 A2.1 2.1 0 1 0 10.10 8.50 Z" fill="#bfffff" fill-rule="evenodd"/></svg>
<div class="a" style="left:222px;width:200px;text-align:center;top:911.19px;line-height:0;font-size:11px;color:#111">4</div>
<div class="a" style="left:186px;width:200px;text-align:right;top:911.19px;line-height:0;font-size:11px;color:#111">2</div>
<div class="a" style="left:327.5px;width:200px;text-align:center;top:911.19px;line-height:0;font-size:11px;color:#111">1,0000</div>
<div class="a" style="left:311px;width:200px;text-align:right;top:911.19px;line-height:0;font-size:11px;color:#111">2.684,00</div>
<div class="a" style="left:375px;width:200px;text-align:right;top:911.19px;line-height:0;font-size:11px;color:#111">0,00</div>
<svg class="a" style="left:578.9px;top:902.4px" width="15" height="15"><circle cx="7.35" cy="7.35" r="7.35" fill="#c4a018"/><rect x="6.17" y="1.74" width="2.76" height="1.78" fill="#bfffff"/><path d="M5.18 5.5 H8.93 V10.8 H9.82 V12.4 H5.08 V10.8 H5.97 V7.1 H5.18 Z" fill="#bfffff"/></svg>
<div class="a" style="left:446.5px;width:200px;text-align:right;top:911.19px;line-height:0;font-size:11px;color:#111">0,00</div>
<div class="a" style="left:546.5px;width:200px;text-align:right;top:911.19px;line-height:0;font-size:11px;color:#111">0,00</div>
<div class="a" style="left:616px;width:200px;text-align:right;top:911.19px;line-height:0;font-size:11px;color:#111">0,00</div>
<div class="a" style="left:698px;width:200px;text-align:right;top:911.19px;line-height:0;font-size:11px;color:#111">0,00</div>
<div class="a" style="left:767px;width:200px;text-align:right;top:911.19px;line-height:0;font-size:11px;color:#111">2.684,00</div>
<div class="a" style="left:1004px;top:904.3px;width:13px;height:13px;border:1px solid rgba(0,0,0,.17);border-radius:2.5px;background:rgba(0,0,0,.025)"></div>
<div class="a" style="left:1114.5px;top:911.19px;line-height:0;font-size:11px;color:#111;transform:scaleX(0.86);transform-origin:0 0">NÃO</div>
<div class="circ" style="left:1139.6px;top:905.1px;width:11px;height:11px;background:#18a04a"></div>
<div class="a" style="left:100.8px;top:995.79px;line-height:0;font-size:11px;color:#306f9e;letter-spacing:-0.165px">G 02 - IMPERMEABILIZACAO LET-001 - [COMPLEMENTO: IMPERMEABILIZACAO SOFA - ATE 3,00 METROS]</div>
<div class="circ" style="left:101.8px;top:1027.9px;width:25.2px;height:25.2px;background:#c3e9e9"></div>
<svg class="a" style="left:106.4px;top:1032.5px" width="16" height="16"><circle cx="6.9" cy="7" r="2.9" fill="none" stroke="#bfffff" stroke-width="1.6"/><path d="M9 9.1 L11.8 11.9" stroke="#bfffff" stroke-width="2" stroke-linecap="round"/></svg>
<div class="circ" style="left:151.0px;top:1026.7px;width:26px;height:27.6px;background:#c3e9e9"></div>
<svg class="a" style="left:156.0px;top:1032.5px" width="16" height="16"><path d="M3.04 6.05 A5.8 5.8 0 1 1 3.86 12.23" fill="none" stroke="#bfffff" stroke-width="2.2"/><path d="M1 2.3 L2.4 2.3 L3.3 3.4 L6.3 6 L6.3 7.5 L1 7.5 Z" fill="#bfffff"/><rect x="8.3" y="4.8" width="1.6" height="5.2" fill="#bfffff"/><rect x="5.4" y="8.8" width="4.5" height="1.3" fill="#bfffff"/></svg>
<div class="circ" style="left:255.0px;top:1026.7px;width:26px;height:27.6px;background:#c3e9e9"></div>
<svg class="a" style="left:260.0px;top:1032.5px" width="16" height="16"><path d="M12.82 7.17 L14.99 7.28 L14.99 9.72 L12.82 9.83 L12.35 10.96 L13.81 12.58 L12.08 14.31 L10.46 12.85 L9.33 13.32 L9.22 15.49 L6.78 15.49 L6.67 13.32 L5.54 12.85 L3.92 14.31 L2.19 12.58 L3.65 10.96 L3.18 9.83 L1.01 9.72 L1.01 7.28 L3.18 7.17 L3.65 6.04 L2.19 4.42 L3.92 2.69 L5.54 4.15 L6.67 3.68 L6.78 1.51 L9.22 1.51 L9.33 3.68 L10.46 4.15 L12.08 2.69 L13.81 4.42 L12.35 6.04 Z M10.10 8.50 A2.1 2.1 0 1 0 5.90 8.50 A2.1 2.1 0 1 0 10.10 8.50 Z" fill="#bfffff" fill-rule="evenodd"/></svg>
<div class="a" style="left:222px;width:200px;text-align:center;top:1041.19px;line-height:0;font-size:11px;color:#111">5</div>
<div class="a" style="left:186px;width:200px;text-align:right;top:1041.19px;line-height:0;font-size:11px;color:#111">5</div>
<div class="a" style="left:327.5px;width:200px;text-align:center;top:1041.19px;line-height:0;font-size:11px;color:#111">1,0000</div>
<div class="a" style="left:311px;width:200px;text-align:right;top:1041.19px;line-height:0;font-size:11px;color:#111">1,00</div>
<div class="a" style="left:375px;width:200px;text-align:right;top:1041.19px;line-height:0;font-size:11px;color:#111">0,00</div>
<svg class="a" style="left:578.9px;top:1032.4px" width="15" height="15"><circle cx="7.35" cy="7.35" r="7.35" fill="#c4a018"/><rect x="6.17" y="1.74" width="2.76" height="1.78" fill="#bfffff"/><path d="M5.18 5.5 H8.93 V10.8 H9.82 V12.4 H5.08 V10.8 H5.97 V7.1 H5.18 Z" fill="#bfffff"/></svg>
<div class="a" style="left:446.5px;width:200px;text-align:right;top:1041.19px;line-height:0;font-size:11px;color:#111">0,00</div>
<div class="a" style="left:546.5px;width:200px;text-align:right;top:1041.19px;line-height:0;font-size:11px;color:#111">0,00</div>
<div class="a" style="left:616px;width:200px;text-align:right;top:1041.19px;line-height:0;font-size:11px;color:#111">0,00</div>
<div class="a" style="left:698px;width:200px;text-align:right;top:1041.19px;line-height:0;font-size:11px;color:#111">0,00</div>
<div class="a" style="left:767px;width:200px;text-align:right;top:1041.19px;line-height:0;font-size:11px;color:#111">1,00</div>
<div class="a" style="left:1004px;top:1034.3px;width:13px;height:13px;border:1px solid rgba(0,0,0,.17);border-radius:2.5px;background:rgba(0,0,0,.025)"></div>
<div class="a" style="left:1114.5px;top:1041.19px;line-height:0;font-size:11px;color:#111;transform:scaleX(0.86);transform-origin:0 0">NÃO</div>
<div class="circ" style="left:1139.6px;top:1035.1px;width:11px;height:11px;background:#18a04a"></div>
<div class="badge" style="left:50.8px;top:487.9px"></div>
<svg class="a" style="left:54px;top:491px" width="26" height="26"><path d="M11.8 5.8 H15.2 V18 H18.1 V20.1 H8.85 V18 H11.8 V10 H9 V8.1 Q11 7.6 11.8 5.8 Z" fill="#fff"/></svg>
<div class="badge" style="left:49.0px;top:694.8px">2</div>
<div class="badge" style="left:46.0px;top:955.0px">3</div>
<div class="a" style="left:1202.5px;top:1111px;width:82.5px;height:27px;border:1px solid #ddd;border-radius:4px;background:#fff;overflow:hidden"><div style="position:absolute;left:0;top:0;width:39px;height:25px;background:#f7f7f7;border-right:1px solid #ddd"></div></div>
<div class="a" style="left:1215px;top:1123.86px;line-height:0;font-size:10.5px;color:#999">Ant</div>
<div class="a" style="left:1256px;top:1123.86px;line-height:0;font-size:10.5px;color:#337ab7">Seg</div>
<div class="a" style="left:1086.5px;top:1159.12px;line-height:0;font-size:13.5px;font-weight:bold;color:#333;letter-spacing:-0.25px">Valor Total</div>
<div class="a" style="left:1173.5px;top:1159.12px;line-height:0;font-size:13.5px;color:#777;letter-spacing:-0.1px">5.758,00</div>
<div class="gb" style="left:0;top:0;width:1316px;height:2px"></div>
<div class="gb" style="left:0;top:0;width:2px;height:1220px"></div>
<div class="gb" style="left:1314px;top:0;width:2px;height:1220px"></div>
<div class="gb" style="left:0;top:1218px;width:1316px;height:2px"></div>
</body></html>
